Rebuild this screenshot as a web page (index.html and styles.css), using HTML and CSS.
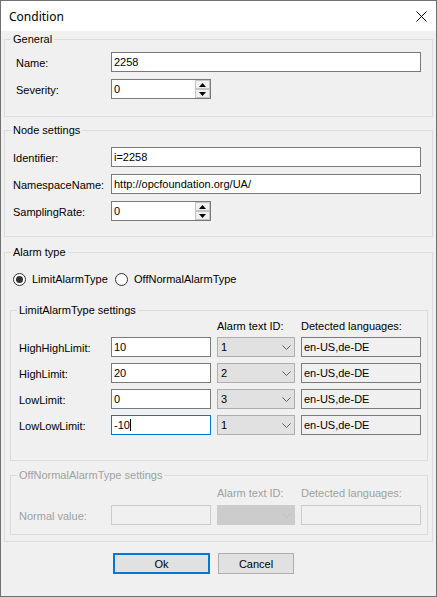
FILE: index.html
```html
<!DOCTYPE html>
<html>
<head>
<meta charset="utf-8">
<link rel="stylesheet" href="styles.css">
</head>
<body>
<div class="window">
  <div class="titlebar">
    <span class="title">Condition</span>
    <svg class="close" width="11" height="11" viewBox="0 0 11 11"><path d="M0.5 0.5 L10.5 10.5 M10.5 0.5 L0.5 10.5" stroke="#000" stroke-width="1" fill="none"/></svg>
  </div>
  <div class="content">
    <fieldset class="group g-general">
      <legend class="gtitle">General</legend>
      <div class="rows">
        <div class="row"><span class="lbl">Name:</span><div class="tb w310">2258</div></div>
        <div class="row"><span class="lbl">Severity:</span>
          <div class="tb w100 spin"><span class="val">0</span>
            <span class="btns"><span class="sb"><svg width="7" height="4" viewBox="0 0 7 4"><path d="M3.5 0 L7 4 L0 4 Z" fill="#000"/></svg></span><span class="sb"><svg width="7" height="4" viewBox="0 0 7 4"><path d="M0 0 L7 0 L3.5 4 Z" fill="#000"/></svg></span></span>
          </div>
        </div>
      </div>
    </fieldset>

    <fieldset class="group g-node">
      <legend class="gtitle">Node settings</legend>
      <div class="rows">
        <div class="row"><span class="lbl">Identifier:</span><div class="tb w310">i=2258</div></div>
        <div class="row"><span class="lbl">NamespaceName:</span><div class="tb w310">http://opcfoundation.org/UA/</div></div>
        <div class="row"><span class="lbl">SamplingRate:</span>
          <div class="tb w100 spin"><span class="val">0</span>
            <span class="btns"><span class="sb"><svg width="7" height="4" viewBox="0 0 7 4"><path d="M3.5 0 L7 4 L0 4 Z" fill="#000"/></svg></span><span class="sb"><svg width="7" height="4" viewBox="0 0 7 4"><path d="M0 0 L7 0 L3.5 4 Z" fill="#000"/></svg></span></span>
          </div>
        </div>
      </div>
    </fieldset>

    <fieldset class="group g-alarm">
      <legend class="gtitle">Alarm type</legend>
      <div class="radio-row">
        <span class="radio first"><span class="circle on"></span><span class="rlbl">LimitAlarmType</span></span>
        <span class="radio"><span class="circle"></span><span class="rlbl">OffNormalAlarmType</span></span>
      </div>

      <fieldset class="group sub g-limit">
        <legend class="gtitle">LimitAlarmType settings</legend>
        <div class="lhead"><span></span><span></span><span>Alarm text ID:</span><span>Detected languages:</span></div>
        <div class="lgrid">
          <span class="glbl">HighHighLimit:</span><div class="tb">10</div>
          <div class="combo"><span>1</span><svg width="9" height="5" viewBox="0 0 9 5"><path d="M0.5 0.5 L4.5 4.5 L8.5 0.5" stroke="#606060" fill="none"/></svg></div>
          <div class="tb ro">en-US,de-DE</div>

          <span class="glbl">HighLimit:</span><div class="tb">20</div>
          <div class="combo"><span>2</span><svg width="9" height="5" viewBox="0 0 9 5"><path d="M0.5 0.5 L4.5 4.5 L8.5 0.5" stroke="#606060" fill="none"/></svg></div>
          <div class="tb ro">en-US,de-DE</div>

          <span class="glbl">LowLimit:</span><div class="tb">0</div>
          <div class="combo"><span>3</span><svg width="9" height="5" viewBox="0 0 9 5"><path d="M0.5 0.5 L4.5 4.5 L8.5 0.5" stroke="#606060" fill="none"/></svg></div>
          <div class="tb ro">en-US,de-DE</div>

          <span class="glbl">LowLowLimit:</span><div class="tb focus">-10<span class="caret"></span></div>
          <div class="combo"><span>1</span><svg width="9" height="5" viewBox="0 0 9 5"><path d="M0.5 0.5 L4.5 4.5 L8.5 0.5" stroke="#606060" fill="none"/></svg></div>
          <div class="tb ro">en-US,de-DE</div>
        </div>
      </fieldset>

      <fieldset class="group sub g-off dis">
        <legend class="gtitle">OffNormalAlarmType settings</legend>
        <div class="lhead"><span></span><span></span><span>Alarm text ID:</span><span>Detected languages:</span></div>
        <div class="lgrid">
          <span class="glbl">Normal value:</span><div class="tb dtb"></div>
          <div class="combo dcombo"><span></span><svg width="9" height="5" viewBox="0 0 9 5"><path d="M0.5 0.5 L4.5 4.5 L8.5 0.5" stroke="#bfbfbf" fill="none"/></svg></div>
          <div class="tb dtb"></div>
        </div>
      </fieldset>
    </fieldset>

    <div class="buttons">
      <div class="btn default">Ok</div>
      <div class="btn cancel">Cancel</div>
    </div>
  </div>
</div>
</body>
</html>
```

FILE: styles.css
```css
* { box-sizing: border-box; }
html, body { margin: 0; padding: 0; }
body {
  font-family: "Liberation Sans", Arial, sans-serif;
  font-size: 11px;
  color: #000;
  background: #f0f0f0;
}
.window {
  width: 437px;
  height: 597px;
  border: 1px solid #707070;
  background: #f0f0f0;
  display: flex;
  flex-direction: column;
}
.titlebar {
  height: 30px;
  flex: none;
  background: #fff;
  display: flex;
  align-items: center;
  justify-content: space-between;
  padding: 0 9px 0 8px;
}
.title {
  font-family: "Noto Sans", "Segoe UI", sans-serif;
  font-size: 12px;
}
.close { display: block; }
.content { padding: 0 3px; }

/* group boxes */
.group {
  margin: 0;
  padding: 0;
  border: 1px solid #dcdcdc;
  min-width: 0;
}
.gtitle {
  margin-left: 6px;
  padding: 0 2px;
  line-height: 15px;
  height: 15px;
}
.g-general { margin-top: 1px; padding-bottom: 17px; }
.g-node { margin-top: 6px; padding-bottom: 15px; }
.g-alarm { margin-top: 8px; padding-bottom: 6px; }
.sub { margin-left: 5px; margin-right: 4px; }
.g-limit { margin-top: 17px; padding-bottom: 25px; }
.g-off { margin-top: 7px; padding-bottom: 9px; }

/* label rows */
.rows { display: flex; flex-direction: column; gap: 7px; }
.g-general .rows { padding-top: 5px; }
.g-node .rows { padding-top: 9px; }
.row { display: flex; align-items: center; height: 20px; }
.lbl { width: 106px; line-height: 20px; padding-top: 1px; }
.g-general .lbl { padding-left: 11px; }
.g-node .lbl { padding-left: 8px; }

/* text boxes */
.tb {
  height: 20px;
  border: 1px solid #7a7a7a;
  background: #fff;
  padding: 0 2px;
  line-height: 18px;
  white-space: nowrap;
  overflow: hidden;
}
.w310 { width: 310px; }
.w100 { width: 100px; }
.spin { display: flex; padding-right: 0; }
.val { flex: 1; }
.btns { width: 15px; display: flex; flex-direction: column; }
.sb {
  height: 9px;
  background: #f0f0f0;
  border: 1px solid #c4c4c4;
  display: flex;
  align-items: center;
  justify-content: center;
}
.sb svg { display: block; }
.ro { background: #f0f0f0; }
.focus { border-color: #0078d7; }
.caret {
  display: inline-block;
  width: 1px;
  height: 12px;
  background: #000;
  vertical-align: -2px;
}

/* radios */
.radio-row {
  display: flex;
  align-items: center;
  height: 14px;
  margin-top: 12px;
  padding-left: 8px;
}
.radio { display: flex; align-items: center; }
.first { width: 102px; }
.circle {
  width: 13px;
  height: 13px;
  border: 1px solid #333;
  border-radius: 50%;
  background: #fff;
  display: flex;
  align-items: center;
  justify-content: center;
}
.on::after {
  content: "";
  width: 7px;
  height: 7px;
  border-radius: 50%;
  background: #333;
}
.rlbl { margin-left: 6px; }

/* limit grid */
.lhead, .lgrid {
  display: grid;
  grid-template-columns: 94px 100px 78px 120px;
  column-gap: 6px;
}
.lhead { line-height: 14px; height: 14px; }
.g-limit .lhead { margin-top: 1px; margin-bottom: 4px; }
.g-off .lhead { margin-top: 3px; margin-bottom: 5px; }
.lgrid { row-gap: 6px; grid-auto-rows: 20px; }
.glbl { padding-left: 8px; line-height: 20px; padding-top: 1px; }

.combo {
  height: 20px;
  border: 1px solid #adadad;
  background: #e1e1e1;
  display: flex;
  align-items: center;
  justify-content: space-between;
  padding: 0 3px;
}
.combo svg { display: block; }

/* disabled */
.dis { color: #a0a0a0; }
.dtb { border-color: #cccccc; background: #f0f0f0; }
.dcombo { background: #cccccc; border-color: #cccccc; }

/* buttons */
.buttons {
  display: flex;
  gap: 8px;
  margin-top: 11px;
  padding-left: 109px;
}
.btn {
  height: 21px;
  border: 1px solid #adadad;
  background: #e1e1e1;
  display: flex;
  align-items: center;
  justify-content: center;
}
.default { width: 97px; border: 2px solid #0078d7; }
.cancel { width: 76px; }
```
